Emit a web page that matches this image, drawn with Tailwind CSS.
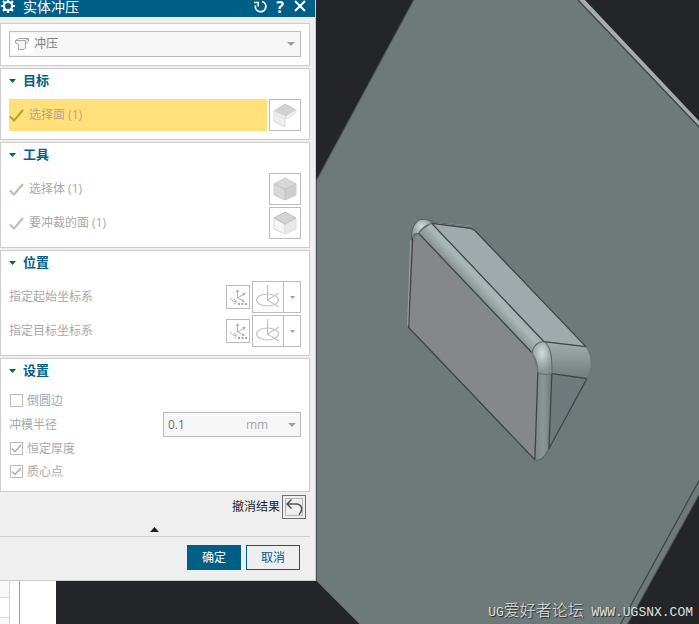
<!DOCTYPE html>
<html lang="zh-CN">
<head>
  <meta charset="UTF-8" />
  <meta name="viewport" content="width=device-width, initial-scale=1.0" />
  <title>实体冲压</title>
  <script src="https://cdn.jsdelivr.net/npm/@tailwindcss/browser@4"></script>
</head>
<body class="relative min-h-screen overflow-hidden bg-[#242529] font-['Open_Sans','Noto_Sans_CJK_SC',sans-serif] text-xs text-[#a8a8a8]">

  <!-- 3D viewport -->
  <svg class="absolute inset-0 h-full w-full" viewBox="0 0 699 624" preserveAspectRatio="xMinYMin slice" aria-hidden="true">
    <defs>
      <linearGradient id="edgeFillet" gradientUnits="userSpaceOnUse" x1="471" y1="292" x2="485" y2="279">
        <stop offset="0" stop-color="#7f898a" />
        <stop offset=".35" stop-color="#95a1a2" />
        <stop offset=".7" stop-color="#abb7b7" />
        <stop offset="1" stop-color="#a6b0b1" />
      </linearGradient>
      <linearGradient id="sideFillet" x1="0" y1="0" x2="0" y2="1">
        <stop offset="0" stop-color="#a3aeaf" />
        <stop offset="1" stop-color="#727c7d" />
      </linearGradient>
      <linearGradient id="cornerFillet" x1="0" y1="0" x2="1" y2="0">
        <stop offset="0" stop-color="#7e8889" />
        <stop offset=".5" stop-color="#8c9697" />
        <stop offset="1" stop-color="#6f797a" />
      </linearGradient>
      <radialGradient id="ball" cx=".5" cy=".35" r=".6">
        <stop offset="0" stop-color="#d3dcdd" />
        <stop offset=".5" stop-color="#a9b4b5" />
        <stop offset="1" stop-color="#879192" />
      </radialGradient>
    </defs>
    <path d="M413 0H582L699 123V492L626 624H360L316 580V180Z" fill="#70797a" />
    <path d="M578 0h6L699 122v5Z" fill="#a3adaf" />
    <path d="M577 0L699 128M699 478L619 624" stroke="#414546" stroke-width="1.3" fill="none" />
    <path d="M413 0L316 180M699 492L626 624" stroke="#4c5355" stroke-width="1" fill="none" />

    <g stroke-linejoin="round">
      <path d="M551 373L586 378L548 448Z" fill="#6f787a" />
      <path d="M431 223L472 229L585 346L543 341Z" fill="#a0aaac" />
      <path d="M543 341L585 346C592 356 592 368 586 378L551 373Z" fill="url(#sideFillet)" />
      <path d="M411 240L418 233L531 352L537 372L534 459L408 327Z" fill="#84888a" />
      <path d="M418 233L431 223L543 341L531 352Z" fill="url(#edgeFillet)" />
      <path d="M537 372L551 373L548 448Q541 462 534 459Z" fill="url(#cornerFillet)" />
      <path d="M531 352Q534 341 543 341Q552 346 551 373Q543 375 537 372Q537 360 531 352Z" fill="url(#ball)" />
      <path d="M411 240Q410 222 421 219Q428 219 431 223Q421 226 418 233Q413 233 411 240Z" fill="url(#ball)" />
    </g>
    <g fill="none" stroke="#414546" stroke-width="1.3" stroke-linecap="round">
      <path d="M418 233L531 352M431 223L543 341L585 346L474 230M412 238L408 327L534 459L537 372M551 373L548 448M551 373L586 378L548 448" />
      <path d="M433 222L470 226" stroke="#a3adaf" />
      <path d="M431 223L470 228L474 230" />
      <path d="M411 240Q410 222 421 219Q428 219 433 222L469 226L474 230M534 459Q541 462 548 448" stroke="#5a6263" stroke-width="1" />
      <path d="M412 237Q413 233 418 233Q421 226 431 223M531 352Q534 341 543 341Q552 346 551 373" stroke="#5d6566" stroke-width="1" />
      <path d="M551 373Q543 375 537 372Q537 360 531 352M585 346C592 356 592 368 586 378" stroke="#6b7475" stroke-width="1" />
      <path d="M410 240L407 325" stroke="#98a2a3" stroke-width="1" />
    </g>
  </svg>

  <!-- Dialog -->
  <main class="relative w-[316px] border-r border-b border-[#c9cbcc] bg-[#efefef]">
    <header class="flex h-[17px] items-center bg-[#005f87] pb-1 text-white">
      <svg class="size-4" viewBox="0 0 16 16" fill="none" stroke="#fff" aria-hidden="true">
        <circle cx="8" cy="7" r="4.200" stroke-width="2.200" />
        <path d="M8 0v3M8 11v3M1 7h3M12 7h3M3 2l2 2M11 10l2 2M13 2l-2 2M3 12l2-2" stroke-width="2.200" />
      </svg>
      <h1 class="ml-[7px] text-sm leading-3">实体冲压</h1>
      <div class="mr-2 ml-auto flex items-center gap-2">
        <button type="button" aria-label="重置">
          <svg class="size-3.5" viewBox="0 0 14 14" fill="none" stroke="#fff" stroke-width="1.800">
            <path d="M9 1.500A5.200 5.200 0 1 1 2.500 5.500" />
            <path d="M1 2.500H5.200V6.500" stroke-width="1.500" />
          </svg>
        </button>
        <button type="button" aria-label="帮助" class="w-2.5 text-base leading-3 font-bold">?</button>
        <button type="button" aria-label="关闭">
          <svg class="size-3.5" viewBox="0 0 14 14" fill="none" stroke="#fff" stroke-width="2">
            <path d="M2 1l10 10M12 1L2 11" />
          </svg>
        </button>
      </div>
    </header>

    <form class="mt-1.5 mr-[5px] flex flex-col gap-0.5">
      <section class="border border-[#cdcdcd] bg-white px-2 pt-[7px] pb-2">
        <label class="relative flex">
          <select aria-label="类型" class="h-[26px] w-full appearance-none border border-[#bcbcbc] bg-[#f6f6f6] pl-6 text-xs text-[#808080]">
            <option>冲压</option>
          </select>
          <svg class="absolute top-[3px] left-[3px] h-5 w-[22px] bg-white" viewBox="0 0 22 20" fill="#f6f6f6" stroke="#a8a8a8" aria-hidden="true">
            <path d="M3.500 6.500L6.500 4.500H16.500V7.500L13.500 10V14L12 15.500H6.500V10.500L3.500 9Z" />
            <path d="M3.500 6.500H13.500L16.500 4.500M13.500 6.500V10" fill="none" />
          </svg>
          <svg class="absolute top-[11px] right-[6px] h-1 w-2" viewBox="0 0 8 4" fill="#a0a0a0" aria-hidden="true"><path d="M0 0h8L4 4z" /></svg>
        </label>
      </section>

      <section class="border border-[#cdcdcd] bg-white px-2 pb-2">
        <h2 class="mb-1.5">
          <button type="button" class="flex h-6 items-center gap-[7px] text-[13px] font-bold text-[#005f87]">
            <svg class="h-1 w-[7px]" viewBox="0 0 7 4" fill="currentColor" aria-hidden="true"><path d="M0 0h7L3.500 4z" /></svg>目标
          </button>
        </h2>
        <div class="flex gap-0.5">
          <button type="button" class="flex h-8 flex-1 items-center gap-1 bg-[#ffe07a] text-[#b3a88a]">
            <svg class="size-4" viewBox="0 0 16 16" fill="none" stroke="#a9a822" stroke-width="2" aria-hidden="true"><path d="M1 9.500L5 13.500L14 3" /></svg>
            选择面 (1)
          </button>
          <button type="button" aria-label="面规则" class="grid size-8 place-items-center border border-[#bcbcbc] bg-white">
            <svg class="size-[26px]" viewBox="0 0 26 26" stroke-linejoin="round">
              <path d="M2 9L13 2L24 8L14 14.500Z" fill="#d2d2d2" stroke="#c9c9c9" />
              <path d="M2 9L14 14.500Q12.500 16 13 25L2 19.500Z" fill="#f0f0f0" stroke="#dadada" />
              <path d="M2 12L13 17M14 14.500L24 8V11L15 17Z" fill="#f0f0f0" stroke="#e0e0e0" />
            </svg>
          </button>
        </div>
      </section>

      <section class="border border-[#cdcdcd] bg-white px-2 pb-2">
        <h2 class="mb-1.5">
          <button type="button" class="flex h-6 items-center gap-[7px] text-[13px] font-bold text-[#005f87]">
            <svg class="h-1 w-[7px]" viewBox="0 0 7 4" fill="currentColor" aria-hidden="true"><path d="M0 0h7L3.500 4z" /></svg>工具
          </button>
        </h2>
        <div class="flex flex-col gap-0.5">
          <div class="flex gap-0.5">
            <button type="button" class="flex h-8 flex-1 items-center gap-1">
              <svg class="size-4" viewBox="0 0 16 16" fill="none" stroke="#a9c8ae" stroke-width="2" aria-hidden="true"><path d="M1 9.500L5 13.500L14 3" /></svg>
              选择体 (1)
            </button>
            <button type="button" aria-label="体规则" class="grid size-8 place-items-center border border-[#bcbcbc] bg-white">
              <svg class="size-6" viewBox="0 0 24 24" stroke-linejoin="round">
                <path d="M12 1L23 7V18L12 23L1 18V7Z" fill="#d8d8d8" stroke="#cbcbcb" />
                <path d="M12 12L23 7V18L12 23Z" fill="#cecece" />
                <path d="M1 7L12 12L23 7M12 12V23" fill="none" stroke="#c4c4c4" />
              </svg>
            </button>
          </div>
          <div class="flex gap-0.5">
            <button type="button" class="flex h-8 flex-1 items-center gap-1">
              <svg class="size-4" viewBox="0 0 16 16" fill="none" stroke="#a9c8ae" stroke-width="2" aria-hidden="true"><path d="M1 9.500L5 13.500L14 3" /></svg>
              要冲裁的面 (1)
            </button>
            <button type="button" aria-label="冲裁面规则" class="grid size-8 place-items-center border border-[#bcbcbc] bg-white">
              <svg class="size-6" viewBox="0 0 24 24" stroke-linejoin="round">
                <path d="M1 7L12 13V23L1 18Z" fill="#f4f4f4" stroke="#dadada" />
                <path d="M23 7L12 13V23L23 18Z" fill="#e9e9e9" stroke="#dadada" />
                <path d="M12 1L23 7L12 13L1 7Z" fill="#d4d4d4" stroke="#c0c0c0" />
              </svg>
            </button>
          </div>
        </div>
      </section>

      <section class="border border-[#cdcdcd] bg-white px-2 pb-2">
        <h2 class="mb-1.5">
          <button type="button" class="flex h-6 items-center gap-[7px] text-[13px] font-bold text-[#005f87]">
            <svg class="h-1 w-[7px]" viewBox="0 0 7 4" fill="currentColor" aria-hidden="true"><path d="M0 0h7L3.500 4z" /></svg>位置
          </button>
        </h2>
        <div class="flex flex-col gap-0.5">
          <div class="flex h-8 items-center gap-0.5">
            <span class="flex-1">指定起始坐标系</span>
            <button type="button" aria-label="起始坐标系对话框" class="grid size-6 place-items-center border border-[#bcbcbc] bg-white">
              <svg class="size-[22px]" viewBox="0 0 22 22" fill="none" stroke="#b4b4b4">
                <path d="M10.500 5V12L17 15M10.500 12L17 8" />
                <path d="M10.500 3L8.500 6h4zM19 6.500l-4 .8 2 2.700zM18.500 15.500l-3-2.500-.5 3z" fill="#b4b4b4" stroke="none" />
                <path d="M3.500 12Q4 15.500 9 15.500M7 13L10 15.500L7 18.500" />
                <path d="M11 18h2M14.500 18h2M18 18h2" stroke="#a6a6a6" stroke-width="2" />
              </svg>
            </button>
            <div class="flex h-8 border border-[#bcbcbc] bg-white">
              <button type="button" aria-label="起始坐标系" class="grid w-[30px] place-items-center">
                <svg class="size-[26px]" viewBox="0 0 26 26" fill="none" stroke="#c4c4c4" stroke-width="1.200">
                  <ellipse cx="12.500" cy="16" rx="11" ry="6" />
                  <path d="M12.500 1V16L24 9M12.500 16L24 23" />
                </svg>
              </button>
              <button type="button" aria-label="更多起始坐标系" class="grid w-[17px] place-items-center border-l border-[#bcbcbc]">
                <svg class="h-[3px] w-[5px]" viewBox="0 0 5 3" fill="#a0a0a0"><path d="M0 0h5L2.500 3z" /></svg>
              </button>
            </div>
          </div>
          <div class="flex h-8 items-center gap-0.5">
            <span class="flex-1">指定目标坐标系</span>
            <button type="button" aria-label="目标坐标系对话框" class="grid size-6 place-items-center border border-[#bcbcbc] bg-white">
              <svg class="size-[22px]" viewBox="0 0 22 22" fill="none" stroke="#b4b4b4">
                <path d="M10.500 5V12L17 15M10.500 12L17 8" />
                <path d="M10.500 3L8.500 6h4zM19 6.500l-4 .8 2 2.700zM18.500 15.500l-3-2.500-.5 3z" fill="#b4b4b4" stroke="none" />
                <path d="M3.500 12Q4 15.500 9 15.500M7 13L10 15.500L7 18.500" />
                <path d="M11 18h2M14.500 18h2M18 18h2" stroke="#a6a6a6" stroke-width="2" />
              </svg>
            </button>
            <div class="flex h-8 border border-[#bcbcbc] bg-white">
              <button type="button" aria-label="目标坐标系" class="grid w-[30px] place-items-center">
                <svg class="size-[26px]" viewBox="0 0 26 26" fill="none" stroke="#c4c4c4" stroke-width="1.200">
                  <ellipse cx="12.500" cy="16" rx="11" ry="6" />
                  <path d="M12.500 1V16L24 9M12.500 16L24 23" />
                </svg>
              </button>
              <button type="button" aria-label="更多目标坐标系" class="grid w-[17px] place-items-center border-l border-[#bcbcbc]">
                <svg class="h-[3px] w-[5px]" viewBox="0 0 5 3" fill="#a0a0a0"><path d="M0 0h5L2.500 3z" /></svg>
              </button>
            </div>
          </div>
        </div>
      </section>

      <section class="border border-[#cdcdcd] bg-white px-2 pb-2">
        <h2 class="mb-1.5">
          <button type="button" class="flex h-6 items-center gap-[7px] text-[13px] font-bold text-[#005f87]">
            <svg class="h-1 w-[7px]" viewBox="0 0 7 4" fill="currentColor" aria-hidden="true"><path d="M0 0h7L3.500 4z" /></svg>设置
          </button>
        </h2>
        <label class="flex h-[23px] items-center gap-1 pl-px">
          <span class="grid">
            <input type="checkbox" class="peer col-start-1 row-start-1 size-[13px] appearance-none border border-[#bcbcbc] bg-white" />
            <svg class="pointer-events-none invisible col-start-1 row-start-1 size-[13px] peer-checked:visible" viewBox="0 0 13 13" fill="none" stroke="#ababab" stroke-width="1.500"><path d="M2 6.500L5 9.500L11 3" /></svg>
          </span>
          倒圆边
        </label>
        <div class="flex items-center justify-between">
          <label for="radius">冲模半径</label>
          <div class="relative flex h-[25px] w-[138px] items-center border border-[#bcbcbc] bg-[#f6f6f6]">
            <input id="radius" type="text" value="0.1" class="w-[78px] pl-1 text-xs text-[#6e6e6e]" />
            <select aria-label="单位" class="flex-1 appearance-none pl-1 text-xs">
              <option>mm</option>
              <option>in</option>
            </select>
            <svg class="pointer-events-none absolute top-[10px] right-1 h-1 w-2" viewBox="0 0 8 4" fill="#a0a0a0" aria-hidden="true"><path d="M0 0h8L4 4z" /></svg>
          </div>
        </div>
        <label class="flex h-[23px] items-center gap-1 pl-px">
          <span class="grid">
            <input type="checkbox" checked class="peer col-start-1 row-start-1 size-[13px] appearance-none border border-[#bcbcbc] bg-white" />
            <svg class="pointer-events-none invisible col-start-1 row-start-1 size-[13px] peer-checked:visible" viewBox="0 0 13 13" fill="none" stroke="#ababab" stroke-width="1.500"><path d="M2 6.500L5 9.500L11 3" /></svg>
          </span>
          恒定厚度
        </label>
        <label class="flex h-[23px] items-center gap-1 pl-px">
          <span class="grid">
            <input type="checkbox" checked class="peer col-start-1 row-start-1 size-[13px] appearance-none border border-[#bcbcbc] bg-white" />
            <svg class="pointer-events-none invisible col-start-1 row-start-1 size-[13px] peer-checked:visible" viewBox="0 0 13 13" fill="none" stroke="#ababab" stroke-width="1.500"><path d="M2 6.500L5 9.500L11 3" /></svg>
          </span>
          质心点
        </label>
      </section>
    </form>

    <div class="mt-[3px] mr-[9px] flex items-center justify-end gap-0.5">
      <label for="undo" class="text-[#1e1e1e]">撤消结果</label>
      <button id="undo" type="button" class="grid size-6 place-items-center border border-[#707070]">
        <svg class="size-[22px]" viewBox="0 0 22 22" fill="none" stroke="#555">
          <path d="M2.500 2.500h17v17h-17z" stroke="#7c7c7c" stroke-dasharray="1 1" />
          <path d="M4 8H14C19 9 20.500 14 16 18.500M8.500 3.500L4 8L8.500 12.500" stroke-width="1.500" />
        </svg>
      </button>
    </div>
    <button type="button" aria-label="收起" class="mx-auto mt-2 flex pr-1.5">
      <svg class="h-[5px] w-[9px]" viewBox="0 0 9 5" fill="#1e1e1e"><path d="M0 5h9L4.500 0z" /></svg>
    </button>
    <footer class="mt-1 mr-[5px] flex justify-end gap-[5px] border-t border-[#cdcdcd] pt-2 pr-2.5 pb-2.5">
      <button type="button" class="h-[25px] w-[54px] bg-[#005f87] text-white">确定</button>
      <button type="button" class="h-[25px] w-[54px] border border-[#005f87] text-[#005f87]">取消</button>
    </footer>
  </main>

  <!-- Navigator pane showing under the dialog -->
  <aside class="relative flex h-11 w-14 bg-white">
    <div class="w-2.5 border-r border-[#d8d8d8]">
      <div class="h-[17px] border-b border-[#d8d8d8] bg-[#f8f8f8]"></div>
      <div class="h-5 border-b border-[#d8d8d8]"></div>
      <div class="h-[7px] bg-[#f8f8f8]"></div>
    </div>
    <div class="w-2.5 border-r border-[#a0a0a0]"></div>
  </aside>

  <p class="absolute right-1.5 bottom-0.5 font-['Liberation_Mono','Noto_Sans_CJK_SC',monospace] text-[13px] leading-5 text-[#dfe3e3] [text-shadow:1px_1px_1px_#222]">UG<span class="text-base leading-5 font-light">爱好者论坛</span> WWW.UGSNX.COM</p>
</body>
</html>
